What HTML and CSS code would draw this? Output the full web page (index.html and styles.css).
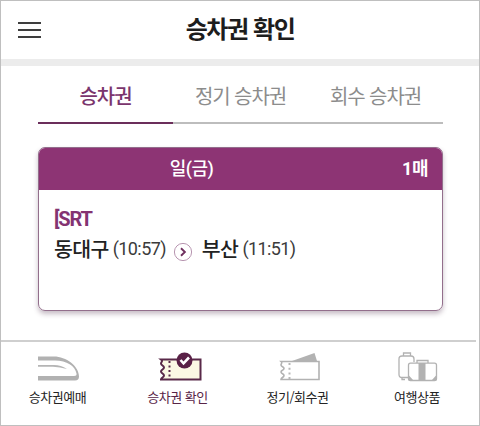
FILE: index.html
```html
<!DOCTYPE html>
<html lang="ko">
<head>
<meta charset="utf-8">
<title>승차권 확인</title>
<link rel="stylesheet" href="styles.css">
</head>
<body>
<div class="app">
  <header class="header">
    <button class="menu" aria-label="메뉴"><i></i><i></i><i></i></button>
    <h1 class="title">승차권 확인</h1>
  </header>
  <main class="main">
    <nav class="tabs">
      <a class="tab active"><span>승차권</span></a>
      <a class="tab"><span>정기 승차권</span></a>
      <a class="tab"><span>회수 승차권</span></a>
    </nav>
    <section class="card">
      <div class="card-head"><span class="date">일(금)</span><span class="count">1매</span></div>
      <div class="card-body">
        <div class="train">[SRT</div>
        <div class="route">
          <span class="station">동대구</span><span class="time">(10:57)</span>
          <svg class="arrow" viewBox="0 0 20 20"><circle cx="10" cy="10" r="8.6" fill="#fff" stroke="#b795b0" stroke-width="1"/><path d="M8 6.2 11.9 10 8 13.8" fill="none" stroke="#70305f" stroke-width="1.9"/></svg>
          <span class="station">부산</span><span class="time">(11:51)</span>
        </div>
      </div>
    </section>
  </main>
  <nav class="bottom">
    <a class="item reserve">
      <svg class="icon" viewBox="0 0 48 34"><path d="M4 6.500H20C32 6.500 45 16 45 26.500Q45 30.500 41 30.500H4V26H40Q43 26 42.500 23.500C41 16 33 10.500 21 10.500H4Z" fill="#b1b1b1"/><path d="M4 15H20Q27 15 33 19Q26 17 19 16.800H4Z" fill="#b5b5b5"/></svg>
      <span>승차권예매</span>
    </a>
    <a class="item confirm">
      <svg class="icon" viewBox="0 0 48 34"><path d="M7 9.500H46.500V29.500H7C7 27.500 10 27.500 10 25.500S7 23.500 7 21.500S10 19.500 10 17.500S7 15.500 7 13.500S9.500 11.500 7 9.500Z" fill="#fbf8e4" stroke="#592949" stroke-width="2"/><path d="M15.500 11V29" fill="none" stroke="#592949" stroke-width="2" stroke-dasharray="2 2.500"/><circle cx="30.500" cy="10.500" r="8" fill="#592046"/><path d="M26.500 10 29.500 13.300 35 7.500" fill="none" stroke="#fff" stroke-width="2.600"/></svg>
      <span>승차권 확인</span>
    </a>
    <a class="item pass">
      <svg class="icon" viewBox="0 0 48 34"><path d="M18 11 40.500 3 43 11Z" fill="#b2b2b2"/><path d="M7 11.500H45V29.500H7C7 27.500 10 27.500 10 25.500S7 24 7 22S10 20.500 10 18.500S7 17 7 15S9 13.500 7 11.500Z" fill="#fff" stroke="#b2b2b2" stroke-width="1.600"/><path d="M15.500 13V29" fill="none" stroke="#b7b7b7" stroke-width="2" stroke-dasharray="2 2.700"/></svg>
      <span>정기/회수권</span>
    </a>
    <a class="item travel">
      <svg class="icon" viewBox="0 0 48 34"><g fill="none" stroke="#b2b2b2" stroke-width="1.300"><path d="M15 27.500H9Q6 27.500 6 24.500V9Q6 6 9 6H18Q21 6 21 9V12"/><path d="M10.500 6V3H17.500V6M9 28V29.500H12"/><path d="M24 13V10.500H35V13"/><rect x="15.500" y="13.200" width="28" height="17.300" rx="2" fill="#fff"/></g><path d="M25.500 13H32.500V30.500H25.500ZM15.500 25 20.500 30.500H15.500ZM43.500 25V30.500H38.500Z" fill="#b2b2b2"/></svg>
      <span>여행상품</span>
    </a>
  </nav>
</div>
</body>
</html>
```
FILE: styles.css
```css
* { box-sizing: border-box; }
body { margin: 0; background: #fff; font-family: Roboto, "Noto Sans CJK KR", sans-serif; color: #222; }
.app { width: 480px; height: 426px; border: 1px solid #bfbfbf; display: flex; flex-direction: column; background: #fff; overflow: hidden; white-space: nowrap; }
.header { height: 65px; flex: none; border-bottom: 7px solid #ececec; display: grid; grid-template-columns: 60px 1fr 60px; align-items: center; }
.menu { border: 0; background: none; padding: 0; margin-left: 17px; width: 23px; height: 16px; display: flex; flex-direction: column; justify-content: space-between; }
.menu i { height: 2px; background: #3e3e3e; }
.title { margin: -5px 0 0; text-align: center; font: 700 24px/36px "Noto Sans CJK KR", sans-serif; letter-spacing: -1.4px; color: #1d1d1d; }
.main { flex: 1; min-height: 0; padding: 0 36px 0 37px; }
.tabs { display: grid; grid-template-columns: repeat(3, 1fr); height: 58px; }
.tab { border-bottom: 2px solid #bdbdbd; text-align: center; font: 400 20px/30px "Noto Sans CJK KR", sans-serif; letter-spacing: -1.1px; padding-top: 15px; color: #8c8c8c; }
.tab.active { color: #7b356d; font-weight: 500; border-color: #6b2e5b; }
.card { margin-top: 23px; height: 164px; border: 1px solid #936f8c; border-radius: 7px; overflow: hidden; box-shadow: 0 3px 5px rgba(70, 35, 65, .3); }
.card-head { height: 42px; background: #8d3474; color: #fff; display: grid; grid-template-columns: 1fr 98px; align-items: center; font: 500 18px/28px Roboto, "Noto Sans CJK KR", sans-serif; letter-spacing: -.5px; }
.date { text-align: center; }
.count { font-weight: 700; text-align: right; padding-right: 14px; }
.card-body { padding: 15px; }
.train { font: 700 20px/28px Roboto, sans-serif; letter-spacing: -1.2px; color: #843371; }
.route { display: flex; align-items: center; height: 32px; }
.station { font: 500 20.500px/30px "Noto Sans CJK KR", sans-serif; letter-spacing: -.6px; margin-top: -3px; color: #222; }
.time { font: 400 18px/30px Roboto, sans-serif; letter-spacing: -.6px; margin-left: 4px; color: #3b3b3b; }
.arrow { width: 20px; height: 20px; margin: 5px 9px 0 7px; }
.bottom { height: 85px; flex: none; border-top: 2px solid #cfcfcf; display: grid; grid-template-columns: 113px 127px 113px 1fr; margin-right: 3px; }
.item { display: flex; flex-direction: column; align-items: center; padding-top: 8px; font: 400 13px/20px "Noto Sans CJK KR", sans-serif; letter-spacing: -.5px; color: #242424; }
.item.travel { padding-left: 4px; }
.icon { width: 48px; height: 34px; margin-bottom: 3px; }
.confirm { color: #582447; }
```
